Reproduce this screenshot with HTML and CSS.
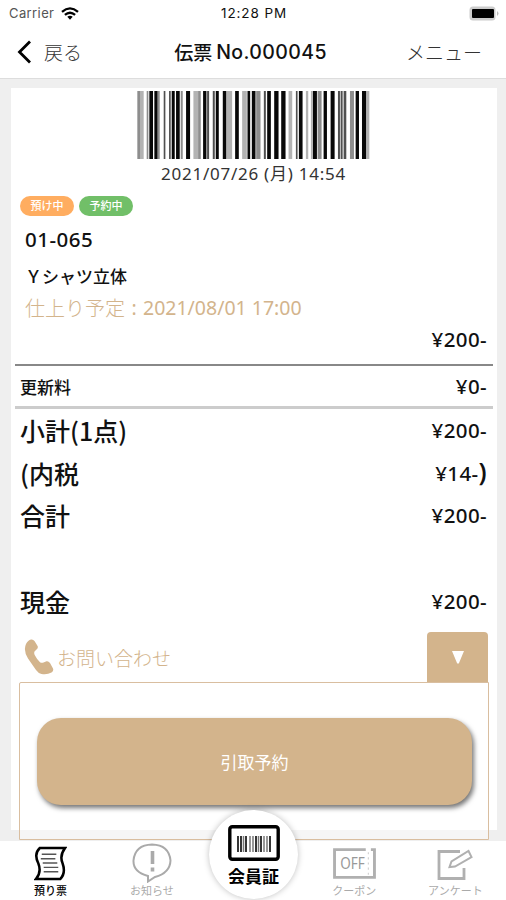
FILE: index.html
```html
<!DOCTYPE html>
<html lang="ja">
<head>
    <meta charset="UTF-8">
    <meta name="viewport" content="width=device-width, initial-scale=1.0">
    <title>伝票No.000045</title>
    <link rel="stylesheet" href="styles.css">
</head>
<body>
    <div class="status-bar">
        <div class="carrier">
            <span>Carrier</span>
            <svg class="wifi" viewBox="0 0 18 13" fill="none" stroke="#000" stroke-width="2.3">
                <path d="M1 4.8Q9-2 17 4.8M3.9 7.9Q9 3.5 14.1 7.9"/>
                <path d="M6.3 9.8Q9 7.6 11.7 9.8L9 12.7Z" fill="#000" stroke="none"/>
            </svg>
        </div>
        <span class="clock">12:28 PM</span>
        <svg class="battery" viewBox="0 0 30 15">
            <rect x=".5" y=".5" width="26" height="14" rx="3.5" fill="#ccc"/>
            <path d="M28 5q3 2.5 0 5z" fill="#bbb"/>
            <rect x="3" y="3" width="22" height="9" rx="1" fill="#000"/>
        </svg>
    </div>

    <header class="nav">
        <a class="back">
            <svg viewBox="0 0 14 24" fill="none" stroke="#000" stroke-width="2.8"><path d="M13 1.5L2.5 12 13 22.5"/></svg>
            <span>戻る</span>
        </a>
        <h1>伝票<span>No.000045</span></h1>
        <a class="menu">メニュー</a>
    </header>

    <main>
        <div class="card">
            <!-- バーコード -->
            <svg class="barcode" viewBox="37 0 698 204" preserveAspectRatio="none">
                <path fill="#080808" d="M74 0h11v204h-11zM89 0h10v204h-10zM141 0h9v204h-9zM154 0h11v204h-11zM184 0h12v204h-12zM235 0h10v204h-10zM273 0h9v204h-9zM294 0h11v204h-11zM331 0h11v204h-11zM368 0h8v204h-8zM381 0h11v204h-11zM427 0h11v204h-11zM448 0h13v204h-13zM469 0h13v204h-13zM522 0h11v204h-11zM564 0h12v204h-12zM596 0h10v204h-10zM617 0h12v204h-12zM692 0h10v204h-10zM711 0h13v204h-13z"/>
                <path fill="#505050" d="M117 0h5v204h-5zM133 0h5v204h-5zM247 0h6v204h-6zM264 0h6v204h-6zM417 0h6v204h-6zM513 0h5v204h-5zM639 0h6v204h-6zM647 0h6v204h-6zM656 0h8v204h-8z"/>
                <path fill="#8d8d8d" d="M38 0h10v204h-10zM66 0h5v204h-5zM99 0h6v204h-6zM168 0h6v204h-6zM220 0h8v204h-8zM394 0h13v204h-13zM578 0h12v204h-12zM675 0h12v204h-12z"/>
                <path fill="#b3b3b3" d="M48 0h9v204h-9zM206 0h14v204h-14zM305 0h17v204h-17zM352 0h14v204h-14zM491 0h11v204h-11zM543 0h7v204h-7zM558 0h6v204h-6zM726 0h7v204h-7z"/>
            </svg>
            <div class="issued">2021/07/26 (月) 14:54</div>

            <div class="badges">
                <span class="badge keep">預け中</span>
                <span class="badge reserved">予約中</span>
            </div>
            <div class="tag-no">01-065</div>
            <div class="item-name">Ｙシャツ立体</div>
            <div class="due"><span>仕上り予定</span><span class="colon">:</span><span class="due-date">2021/08/01 17:00</span></div>
            <div class="item-price">¥200-</div>

            <div class="row fee"><span>更新料</span><span class="price">¥0-</span></div>

            <div class="totals">
                <div class="row"><span>小計(1点)</span><span class="price">¥200-</span></div>
                <div class="row"><span>(内税</span><span class="price">¥14-<b>)</b></span></div>
                <div class="row"><span>合計</span><span class="price">¥200-</span></div>
                <div class="row"></div>
                <div class="row"><span>現金</span><span class="price">¥200-</span></div>
            </div>

            <div class="contact">
                <a class="contact-link">
                    <svg viewBox="0 0 30 36" fill="#d3b48c"><path d="M2 5Q4 1 7 .5Q9 0 10.500 2L13.600 7Q14.400 9 12.500 10.500L10.500 12.500Q9.800 14 10.700 16Q13 20.500 16 23.200Q17.500 24.300 19.500 23.500L22.500 22.300Q24.600 22 26 24L29 29.500Q30 32 27.500 33.600Q23 36 17.500 35Q14.500 34.500 12 31L4 19.500Q-1 11.500 2 5Z"/></svg>
                    <span>お問い合わせ</span>
                </a>
                <button class="toggle"><svg viewBox="0 0 12 13"><path d="M0 0h12L7 12q-1 1.500-2 0z" fill="#fff"/></svg></button>
            </div>
            <div class="panel">
                <button class="pickup">引取予約</button>
            </div>
        </div>
    </main>

    <nav class="tab-bar">
        <a class="tab active">
            <svg viewBox="0 0 34 36" fill="none" stroke="#000" stroke-width="2.6">
                <path d="M6 2H32Q26 10 29.500 18Q33 28 27 34H2Q8 27 4.500 18Q-.5 8 6 2Z"/>
                <path stroke="#555" stroke-width="1.500" d="M8 8.500h15M7 13h15M9 17.500h15M10 22h15M10 26.500h15"/>
            </svg>
            <span>預り票</span>
        </a>
        <a class="tab">
            <svg class="notice" viewBox="0 0 40 40" fill="none" stroke="#aaa" stroke-width="2">
                <path d="M16 33Q1 29 1.500 17.500Q3 2 20 1.500Q37 2 38.500 17.500Q38 30 23 34L16 38.500Z"/>
                <path stroke-width="3.600" d="M20.500 8v13M20.500 24.500v4"/>
            </svg>
            <span>お知らせ</span>
        </a>
        <div class="tab"></div>
        <a class="tab">
            <svg class="coupon" viewBox="0 0 42 30" fill="none" stroke="#b0b0b0" stroke-width="2.800">
                <path d="M32 1.500H1.500V28.500H40.500V1.500H37"/>
                <path stroke="#ccc" stroke-width="1" stroke-dasharray="2 3" d="M34.500 4v23"/>
                <text x="7" y="20" fill="#999" stroke="none" textLength="24" lengthAdjust="spacingAndGlyphs">OFF</text>
            </svg>
            <span>クーポン</span>
        </a>
        <a class="tab">
            <svg class="survey" viewBox="0 0 36 32" fill="none" stroke="#b0b0b0" stroke-width="2.800">
                <path d="M23 3.500H2V30.500H27V20"/>
                <path stroke-width="2" d="M12.500 19L14.500 13.500L31.500 3L34.500 9L18 18.500Z"/>
            </svg>
            <span>アンケート</span>
        </a>
        <a class="member">
            <svg viewBox="0 0 52 36">
                <rect x="1.800" y="1.800" width="48.400" height="32.400" rx="2.500" fill="#fff" stroke="#000" stroke-width="3.400"/>
                <path stroke="#222" stroke-width="1.800" d="M10 11v16M13 11v16M18 11v16M28 11v16M33 11v16M42 11v16"/>
                <path stroke="#777" stroke-width="1.500" d="M15.500 11v16M22 11v16M25 11v16M30.500 11v16M36 11v16M39 11v16"/>
            </svg>
            <span>会員証</span>
        </a>
    </nav>
</body>
</html>
```

FILE: styles.css
```css
* {
    box-sizing: border-box;
}
body {
    margin: 0;
    height: 900px;
    display: flex;
    flex-direction: column;
    overflow: hidden;
    background: #fff;
    color: #111;
    font-family: "Noto Sans", "Noto Sans CJK JP", sans-serif;
}
svg {
    display: block;
}
button {
    border: none;
    padding: 0;
    font-family: inherit;
}
.status-bar {
    height: 27px;
    padding: 0 7px 1px 9px;
    display: grid;
    grid-template-columns: 1fr auto 1fr;
    align-items: center;
    font-family: Inter, sans-serif;
    font-size: 13px;
}
.carrier {
    display: flex;
    align-items: center;
    gap: 7px;
    color: #555;
    letter-spacing: 0.4px;
}
.wifi {
    width: 18px;
    height: 13px;
}
.clock {
    font-size: 13.5px;
    letter-spacing: 0.9px;
}
.battery {
    width: 30px;
    height: 15px;
    justify-self: end;
}
.nav {
    height: 52px;
    padding: 0 24px 2px 17px;
    display: grid;
    grid-template-columns: 1fr auto 1fr;
    align-items: center;
    border-bottom: 1px solid #ddd;
    font-family: "Noto Sans CJK JP", sans-serif;
    font-size: 19px;
    font-weight: 300;
}
.back {
    display: flex;
    align-items: center;
    gap: 13px;
    color: #333;
}
.back svg {
    width: 14px;
    height: 24px;
}
.nav h1 {
    margin: 0;
    padding-left: 2px;
    font-size: 19px;
    font-weight: 500;
    display: flex;
    align-items: center;
    gap: 4px;
}
.nav h1 span {
    font-family: Inter, sans-serif;
    font-size: 19.5px;
    letter-spacing: 0.4px;
}
.menu {
    justify-self: end;
    color: #333;
}
main {
    height: 762px;
    padding: 9px 9px 0 11px;
    background: #efefef;
}
.card {
    height: 742px;
    padding: 3px 4px 0;
    display: flex;
    flex-direction: column;
    background: #fff;
}
.card > * {
    flex: none;
}
.barcode {
    width: 233px;
    height: 68px;
    margin-left: 122px;
}
.issued {
    height: 30px;
    padding-left: 146px;
    line-height: 30px;
    font-size: 17px;
    letter-spacing: 0.75px;
    color: #333;
}
.badges {
    height: 20px;
    margin-top: 7px;
    padding-left: 5px;
    display: flex;
    gap: 5px;
}
.badge {
    width: 54px;
    height: 20px;
    border-radius: 10px;
    line-height: 20px;
    text-align: center;
    font-size: 11px;
    font-weight: 500;
    color: #fff;
}
.keep {
    background: #ffad60;
}
.reserved {
    background: #71bf68;
}
.tag-no {
    height: 45px;
    padding-left: 10px;
    line-height: 47px;
    font-size: 20.5px;
    font-weight: 500;
    letter-spacing: 0.5px;
}
.item-name {
    height: 32px;
    padding-left: 10px;
    line-height: 32px;
    font-size: 17px;
    font-weight: 500;
}
.due {
    height: 30px;
    padding-left: 10px;
    display: flex;
    line-height: 30px;
    font-size: 19.5px;
    color: #d3b48c;
}
.due span:first-child {
    font-family: "Noto Sans CJK JP", sans-serif;
    font-weight: 300;
    font-size: 20px;
}
.colon {
    width: 18px;
    text-align: center;
}
.item-price {
    height: 41px;
    padding-right: 6px;
    line-height: 32px;
    text-align: right;
}
.item-price,
.price {
    font-size: 20.5px;
    font-weight: 500;
    letter-spacing: 0.4px;
}
.price b {
    font-size: 25px;
    font-weight: 600;
    line-height: 20px;
}
.row {
    display: flex;
    align-items: center;
    justify-content: space-between;
    padding: 0 6px 0 5px;
}
.fee {
    height: 45px;
    border-top: 2px solid #888;
    border-bottom: 3px solid #ccc;
    font-size: 17px;
    font-weight: 500;
}
.totals {
    height: 214px;
}
.totals .row {
    height: 42.6px;
    font-family: "Noto Sans CJK JP", sans-serif;
    font-size: 25px;
    font-weight: 500;
    line-height: 36px;
}
.totals .price {
    font-family: "Noto Sans", sans-serif;
}
.contact {
    height: 59px;
    padding: 0 5px 0 9px;
    display: flex;
    justify-content: space-between;
    align-items: flex-end;
}
.contact-link {
    height: 50px;
    display: flex;
    align-items: center;
    gap: 3px;
    font-family: "Noto Sans CJK JP", sans-serif;
    font-size: 19px;
    font-weight: 300;
    color: #d3b48c;
}
.contact-link svg {
    width: 30px;
    height: 36px;
}
.toggle {
    width: 61px;
    height: 50px;
    border-radius: 4px 4px 0 0;
    background: #d3b48c;
}
.toggle svg {
    width: 12px;
    height: 13px;
    margin: 0 auto;
}
.panel {
    height: 158px;
    margin: 0 4px;
    padding: 35px 16px 0 17px;
    border: 1px solid #d9bea0;
    border-radius: 2px 0 0 0;
    background: linear-gradient(#fff 147px, #f6f6f6 147px);
}
.pickup {
    display: block;
    width: 100%;
    height: 87px;
    border-radius: 24px;
    background: #d3b48c;
    box-shadow: 2px 3px 5px rgba(0, 0, 0, 0.55);
    color: #fff;
    font-size: 17px;
}
.tab-bar {
    position: relative;
    height: 59px;
    display: grid;
    grid-template-columns: repeat(5, 1fr);
    background: #fff;
}
.tab {
    display: flex;
    flex-direction: column;
    align-items: center;
    justify-content: flex-end;
    padding-bottom: 1px;
    font-size: 11px;
    line-height: 16px;
    color: #aaa;
}
.tab svg {
    width: 33px;
    height: 35px;
    margin-bottom: 2px;
}
.tab.active {
    color: #000;
    font-weight: 500;
}
.tab .notice {
    width: 40px;
    height: 40px;
    margin-bottom: 0;
}
.tab .coupon {
    width: 43px;
    height: 31px;
    margin-bottom: 4px;
    font-family: "Noto Sans", sans-serif;
    font-size: 15px;
}
.tab .survey {
    width: 36px;
    height: 32px;
    margin-bottom: 3px;
}
/* 中央の会員証ボタンはタブバーの上に重なる */
.member {
    position: absolute;
    left: 209px;
    top: -31px;
    width: 89px;
    height: 89px;
    padding-top: 15px;
    display: flex;
    flex-direction: column;
    align-items: center;
    border-radius: 50%;
    background: #fff;
    box-shadow: 0 0 6px rgba(0, 0, 0, 0.25);
    font-size: 17px;
    font-weight: 600;
    line-height: 32px;
    color: #000;
}
.member svg {
    width: 52px;
    height: 36px;
    flex: none;
}
```
